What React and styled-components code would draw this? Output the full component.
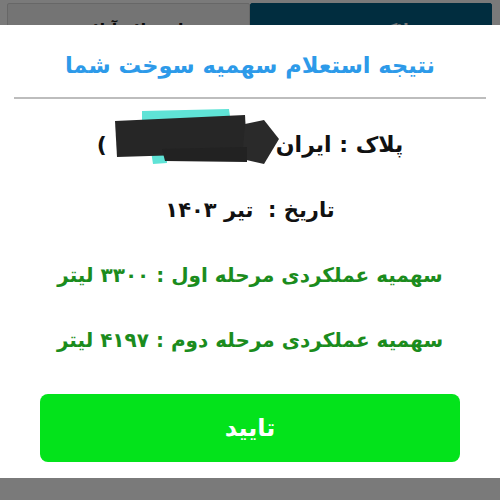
import React from "react";
import styled, { createGlobalStyle } from "styled-components";

const GlobalStyle = createGlobalStyle`
  html, body {
    margin: 0;
    padding: 0;
    background: #ffffff;
    overflow: hidden;
  }
  * {
    box-sizing: border-box;
  }
`;

const Page = styled.div`
  width: 500px;
  height: 500px;
  background: #ffffff;
  font-family: "DejaVu Sans", sans-serif;
  direction: rtl;
`;

const TabBar = styled.div`
  display: flex;
  flex-direction: row;
  padding: 3px 8px 0 7px;
  height: 60px;
`;

const Tab = styled.div`
  flex: 1;
  display: flex;
  justify-content: center;
  padding-top: 16px;
  font-size: 16px;
  font-weight: bold;
  background: ${(p) => (p.$active ? "#045e85" : "#f2f2f2")};
  color: ${(p) => (p.$active ? "#ffffff" : "#111111")};
  border: 1px solid ${(p) => (p.$active ? "#045e85" : "#d8d8d8")};
  border-radius: 2px;
`;

const Backdrop = styled.div`
  position: fixed;
  inset: 0;
  background: rgba(0, 0, 0, 0.52);
`;

const Dialog = styled.div`
  position: fixed;
  top: 25px;
  left: 0;
  right: 0;
  height: 453px;
  background: #ffffff;
  display: flex;
  flex-direction: column;
  direction: rtl;
  font-family: "DejaVu Sans", sans-serif;
`;

const Title = styled.h2`
  margin: 0;
  padding-top: 22px;
  height: 72px;
  text-align: center;
  font-size: 22.5px;
  line-height: 36px;
  font-weight: bold;
  color: #2d9ae9;
`;

const Divider = styled.div`
  height: 2px;
  margin: 0 14px;
  background: #bdbdbd;
`;

const Body = styled.div`
  display: flex;
  flex-direction: column;
  padding-top: 13px;
`;

const Row = styled.div`
  height: 65px;
  display: flex;
  flex-direction: row;
  align-items: center;
  justify-content: center;
  font-size: ${(p) => p.$size || 20}px;
  font-weight: bold;
  color: ${(p) => (p.$green ? "#1b8c1d" : "#111111")};
`;

const Paren = styled.span`
  margin-right: 0;
`;

const Redacted = styled.svg`
  display: block;
  margin-right: -6px;
  margin-top: -14px;
`;

const ConfirmButton = styled.button`
  margin: 22px 40px 0;
  height: 68px;
  border: none;
  border-radius: 8px;
  background: #03e31b;
  color: #ffffff;
  font-family: "DejaVu Sans", sans-serif;
  font-size: 24px;
  font-weight: bold;
  cursor: pointer;
`;

function PlateScribble() {
  return (
    <Redacted width="175" height="58" viewBox="0 0 175 58">
      <polygon points="35,2 122,0 124,15 35,17" fill="#5fe3d6" />
      <polygon points="44,42 60,42 60,54 46,55" fill="#5fe3d6" />
      <polygon points="8,12 138,6 140,44 10,48" fill="#262626" />
      <polygon points="138,15 157,11 172,30 157,55 135,50" fill="#2a2a2a" />
      <polygon points="55,40 140,38 140,53 58,52" fill="#222222" />
    </Redacted>
  );
}

export default function App() {
  return (
    <Page>
      <GlobalStyle />
      <TabBar>
        <Tab $active>پلاک خودرو</Tab>
        <Tab>استعلام آنلاین</Tab>
      </TabBar>
      <Backdrop />
      <Dialog>
        <Title>نتیجه استعلام سهمیه سوخت شما</Title>
        <Divider />
        <Body>
          <Row $size={22}>
            <span>پلاک : ایران</span>
            <PlateScribble />
            <Paren>)</Paren>
          </Row>
          <Row $size={21}>تاریخ :&nbsp; تیر ۱۴۰۳</Row>
          <Row $green>سهمیه عملکردی مرحله اول : ۳۳۰۰ لیتر</Row>
          <Row $green>سهمیه عملکردی مرحله دوم : ۴۱۹۷ لیتر</Row>
        </Body>
        <ConfirmButton>تایید</ConfirmButton>
      </Dialog>
    </Page>
  );
}
